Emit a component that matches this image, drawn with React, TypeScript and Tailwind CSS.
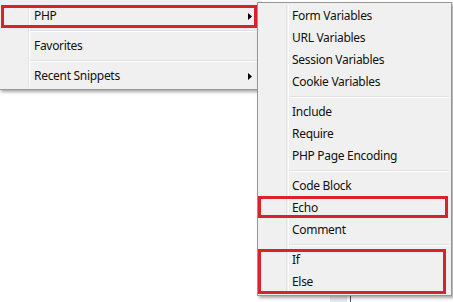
import { Fragment } from 'react'

type Entry = { label: string; sub?: boolean } | 'sep'

const mainItems: Entry[] = [
  { label: 'PHP', sub: true },
  'sep',
  { label: 'Favorites' },
  'sep',
  { label: 'Recent Snippets', sub: true },
]

const phpItems: Entry[] = [
  { label: 'Form Variables' },
  { label: 'URL Variables' },
  { label: 'Session Variables' },
  { label: 'Cookie Variables' },
  'sep',
  { label: 'Include' },
  { label: 'Require' },
  { label: 'PHP Page Encoding' },
  'sep',
  { label: 'Code Block' },
  { label: 'Echo' },
  { label: 'Comment' },
  'sep',
  { label: 'If' },
  { label: 'Else' },
]

function Arrow() {
  return (
    <svg width="4" height="7" viewBox="0 0 4 7" className="mr-[7px] shrink-0">
      <path d="M0 0 L4 3.5 L0 7 Z" fill="#000" />
    </svg>
  )
}

function MenuItems({ items, indent }: { items: Entry[]; indent: string }) {
  return (
    <div className="flex min-w-0 flex-1 flex-col border-l border-white">
      {items.map((item, i) => (
        <Fragment key={i}>
          {item === 'sep' ? (
            <div className="flex h-[8px] flex-col justify-center">
              <div className="h-px bg-[#e0e0e0]" />
              <div className="h-px bg-white" />
            </div>
          ) : (
            <div className={`flex h-[22px] items-center justify-between ${indent}`}>
              <span className="text-[12px] leading-none tracking-[-0.3px] text-[#111]">{item.label}</span>
              {item.sub && <Arrow />}
            </div>
          )}
        </Fragment>
      ))}
    </div>
  )
}

export default function App() {
  return (
    <div
      className="relative h-[302px] w-[453px] overflow-hidden bg-white"
      style={{ fontFamily: '"Noto Sans", "Open Sans", sans-serif' }}
    >
      {/* bits of the page behind the menus */}
      <div className="absolute left-[330px] top-[295px] h-[7px] w-[17px] bg-[#e8e8e8]" />
      <div className="absolute left-[350px] top-[295px] h-[7px] w-px bg-[#555]" />

      {/* Main context menu */}
      <div className="absolute left-[-1px] top-0 flex w-[260px] border-b border-[#979797] bg-[#f0f0f0] pb-[2px] pt-[5px] shadow-[2px_2px_3px_rgba(0,0,0,0.35)]">
        <div className="w-[30px] shrink-0 border-r border-[#e2e3e3]" />
        <MenuItems items={mainItems} indent="pl-[4px]" />
      </div>

      {/* PHP submenu */}
      <div className="absolute left-[257px] top-[2px] flex w-[195px] border border-[#979797] bg-[#f0f0f0] px-[2px] py-[2px] shadow-[2px_2px_3px_rgba(0,0,0,0.35)]">
        <div className="w-[27px] shrink-0 border-r border-[#e2e3e3]" />
        <div className="flex flex-1 flex-col pl-px">
          <MenuItems items={phpItems} indent="pl-[3px]" />
        </div>
      </div>

      {/* Red highlight annotations */}
      <div className="absolute left-[1px] top-[5px] h-[23px] w-[256px] border-[3px] border-[#d8222c]" />
      <div className="absolute left-[258px] top-[196px] h-[22px] w-[190px] border-[3px] border-[#d8222c]" />
      <div className="absolute left-[258px] top-[249px] h-[45px] w-[188px] border-[3px] border-[#d8222c]" />
    </div>
  )
}
